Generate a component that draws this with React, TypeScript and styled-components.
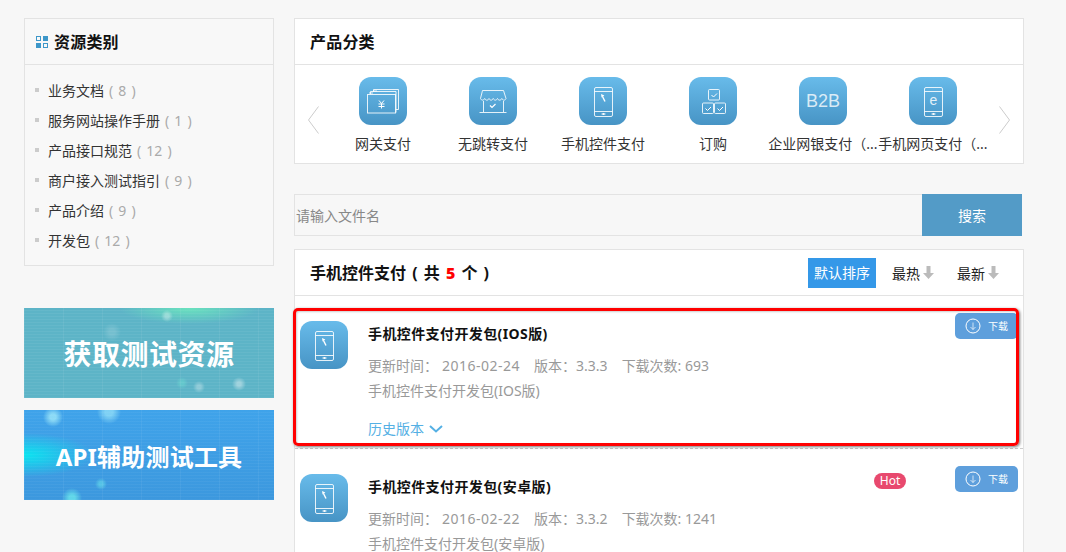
import React from "react";
import styled, { createGlobalStyle, css } from "styled-components";

const FONT = `"Noto Sans", "Noto Sans CJK SC", sans-serif`;

const Global = createGlobalStyle`
  html, body { margin: 0; padding: 0; height: 552px; overflow: hidden; background: #f7f7f7; }
  body { font-family: ${FONT}; color: #333; }
  * { box-sizing: border-box; }
`;

const Page = styled.div`
  display: flex;
  gap: 20px;
  padding: 18px 0 0 24px;
  height: 552px;
  overflow: hidden;
`;
const Side = styled.aside`
  width: 250px;
  flex: none;
  display: flex;
  flex-direction: column;
`;
const Main = styled.main`
  width: 730px;
  flex: none;
  display: flex;
  flex-direction: column;
`;
const SidePanel = styled.section`
  height: 248px;
  flex: none;
  border: 1px solid #e3e3e3;
  background: #f8f8f8;
`;
const PanelHead = styled.header`
  height: 46px;
  display: flex;
  align-items: center;
  gap: 6px;
  border-bottom: 1px solid #e3e3e3;
  font-size: 16px;
  line-height: 44px;
  font-weight: bold;
  letter-spacing: 0.2px;
  color: #111;
`;
const SideHead = styled(PanelHead)`
  padding-left: 11px;
`;
const CatList = styled.ul`
  list-style: none;
  margin: 0;
  padding: 11px 0 0 10px;
`;
const CatRow = styled.li`
  height: 30px;
  display: flex;
  align-items: center;
  gap: 9px;
  font-size: 14px;
  line-height: 28px;
  color: #333;
  &::before {
    content: "";
    width: 4px;
    height: 4px;
    margin-top: -2px;
    background: #ccc;
  }
`;
const Count = styled.span`
  color: #aaa;
  margin-left: 5px;
  white-space: pre;
  word-spacing: 1.5px;
`;
const Banner = styled.div<{ $kind: "green" | "blue"; $top: number }>`
  height: 90px;
  flex: none;
  margin-top: ${(p) => p.$top}px;
  display: flex;
  align-items: center;
  justify-content: center;
  color: #fff;
  font-weight: bold;
  white-space: nowrap;
  ${(p) =>
    p.$kind === "green"
      ? css`
          font-size: 28px;
          letter-spacing: 0.5px;
          background:
            repeating-linear-gradient(0deg, rgba(255,255,255,.05) 0 1px, transparent 1px 3px),
            repeating-linear-gradient(90deg, rgba(255,255,255,.06) 0 1px, transparent 1px 39px),
            radial-gradient(circle at 143px 8px, rgba(255,255,255,.35) 0 2px, transparent 6px),
            radial-gradient(circle at 215px 76px, rgba(255,255,255,.4) 0 2px, transparent 7px),
            radial-gradient(circle at 175px 79px, rgba(255,255,255,.3) 0 2px, transparent 6px),
            radial-gradient(circle at 88px 24px, rgba(255,255,255,.15) 0 3px, transparent 9px),
            radial-gradient(circle at 158px 75px, rgba(120,255,220,.25) 0 2px, transparent 6px),
            radial-gradient(ellipse 70px 16px at 165px 0px, #6ae2be, transparent),
            #5db4c7;
        `
      : css`
          font-size: 24px;
          letter-spacing: 0.2px;
          background:
            repeating-linear-gradient(0deg, rgba(255,255,255,.04) 0 1px, transparent 1px 3px),
            repeating-linear-gradient(90deg, rgba(255,255,255,.05) 0 1px, transparent 1px 39px),
            radial-gradient(circle at 29px 7px, rgba(190,255,255,.6) 0 3px, transparent 10px),
            radial-gradient(circle at 85px 2px, rgba(190,255,255,.5) 0 4px, transparent 12px),
            radial-gradient(circle at 48px 88px, rgba(120,255,240,.6) 0 3px, transparent 10px),
            radial-gradient(circle at 77px 74px, rgba(120,255,240,.4) 0 2px, transparent 6px),
            radial-gradient(ellipse 70px 22px at 0px 45px, #0ae4f0, transparent),
            linear-gradient(180deg, #3fa3ea, #3c98de);
        `}
`;
const CategoryPanel = styled.section`
  height: 146px;
  flex: none;
  border: 1px solid #e3e3e3;
  background: #fff;
`;
const TitleHead = styled(PanelHead)`
  padding-left: 15px;
`;
const Carousel = styled.div`
  display: flex;
  align-items: flex-start;
  padding: 12px 0 0 13px;
`;
const ArrowBox = styled.svg<{ $after?: boolean }>`
  flex: none;
  width: 11px;
  height: 28px;
  margin: 29px ${(p) => (p.$after ? 0 : "9px")} 0 ${(p) => (p.$after ? "11px" : 0)};
`;
const CatItem = styled.div`
  width: 110px;
  flex: none;
  display: flex;
  flex-direction: column;
  align-items: center;
`;
const Tile = styled.div`
  width: 48px;
  height: 48px;
  flex: none;
  border-radius: 12px;
  background: linear-gradient(180deg, #68bbea, #4794c5);
  display: flex;
  align-items: center;
  justify-content: center;
`;
const TileText = styled.span`
  color: rgba(255, 255, 255, 0.78);
  font-family: "Liberation Sans", sans-serif;
  font-size: 18px;
`;
const CatLabel = styled.div`
  width: 110px;
  margin-top: 9px;
  font-size: 14px;
  line-height: 20px;
  text-align: center;
  color: #333;
  white-space: nowrap;
`;
const Search = styled.form`
  display: flex;
  flex: none;
  height: 42px;
  margin: 30px 0 13px;
`;
const SearchInput = styled.input`
  width: 628px;
  height: 42px;
  border: 1px solid #e3e3e3;
  border-right: 0;
  background: #f7f7f7;
  padding: 0 1px;
  font: 14px ${FONT};
  outline: none;
  &::placeholder {
    color: #888;
    opacity: 1;
  }
`;
const SearchButton = styled.button`
  width: 100px;
  height: 42px;
  border: 0;
  background: #539bc7;
  color: #fff;
  font: 14px ${FONT};
`;
const ListPanel = styled.section`
  position: relative;
  border: 1px solid #e3e3e3;
  border-bottom: 0;
  background: #fff;
  flex: none;
  height: 303px;
`;
const ListHead = styled.header`
  height: 46px;
  display: flex;
  align-items: center;
  padding: 0 24px 0 15px;
  border-bottom: 1px solid #e3e3e3;
`;
const ListTitle = styled.h2`
  flex: 1;
  margin: 0;
  font-size: 16px;
  line-height: 44px;
  font-weight: bold;
  color: #111;
  white-space: pre;
  word-spacing: 2px;
`;
const Red = styled.b`
  color: #f00;
`;
const SortActive = styled.div`
  width: 68px;
  height: 30px;
  line-height: 30px;
  margin-right: 16px;
  text-align: center;
  background: #3498e8;
  color: #fff;
  font-size: 14px;
`;
const SortOption = styled.div`
  display: flex;
  align-items: center;
  gap: 3px;
  font-size: 14px;
  color: #222;
  & + & {
    margin-left: 23px;
  }
`;
const Item = styled.article`
  position: relative;
  height: 153px;
  padding: 25px 0 0 5px;
  display: flex;
  gap: 20px;
  border-bottom: 1px dashed #ccc;
`;
const ItemBody = styled.div`
  flex: 1;
  min-width: 0;
`;
const ItemTitle = styled.h3`
  margin: 0 0 6px;
  font-size: 14px;
  line-height: 26px;
  font-weight: bold;
  letter-spacing: 0.4px;
  color: #111;
`;
const Meta = styled.div`
  display: flex;
  font-size: 14px;
  line-height: 25px;
  color: #999;
  white-space: pre;
`;
const MetaPart = styled.span<{ $gap: number; $wide?: boolean }>`
  margin-right: ${(p) => p.$gap}px;
  letter-spacing: ${(p) => (p.$wide ? "0.5px" : "0")};
`;
const Desc = styled.div`
  font-size: 14px;
  line-height: 25px;
  color: #999;
`;
const History = styled.a`
  display: flex;
  align-items: center;
  gap: 5px;
  margin-top: 13px;
  font-size: 14px;
  line-height: 25px;
  color: #55b0e4;
`;
const DownloadButton = styled.div`
  position: absolute;
  top: 17px;
  right: 5px;
  width: 63px;
  height: 26px;
  border-radius: 5px;
  background: #5e9fdc;
  color: #fff;
  font-size: 10px;
  line-height: 24px;
  display: flex;
  align-items: center;
  padding-left: 10px;
  gap: 7px;
`;
const HotBadge = styled.span`
  position: absolute;
  top: 24px;
  left: 579px;
  width: 32px;
  height: 16px;
  border-radius: 8px;
  background: #e8496e;
  color: #fff;
  font-size: 12px;
  line-height: 16px;
  text-align: center;
`;
const Highlight = styled.div`
  position: absolute;
  left: -2px;
  top: 58px;
  width: 726px;
  height: 138px;
  border: 3px solid #f00;
  border-radius: 5px;
  box-shadow: 1px 1px 3px rgba(0, 0, 0, 0.55), inset 1px 1px 2px rgba(0, 0, 0, 0.2);
  pointer-events: none;
`;

const line = { fill: "none", stroke: "rgba(255,255,255,.85)", strokeWidth: 1 };

const PhoneIcon = ({ mark }: { mark: "arrow" | "e" }) => (
  <svg width="48" height="48" viewBox="0 0 48 48">
    <rect x="15.5" y="10.5" width="18" height="29" rx="1.5" {...line} />
    <path d="M15.5 14.5h18M15.5 34.5h18" {...line} />
    <path d="M22.5 37h4" stroke="#fff" strokeWidth="1" fill="none" />
    <circle cx="24.5" cy="37" r="1" fill="#fff" />
    {mark === "arrow" ? (
      <>
        <path d="M23.5 19.5l2.5 5" stroke="#fff" strokeWidth="1.4" fill="none" />
        <path d="M22 17l3.4 1.4-2.8 2z" fill="#fff" />
      </>
    ) : (
      <text x="24.5" y="27.5" fill="rgba(255,255,255,.85)" fontSize="14" textAnchor="middle" fontFamily="Liberation Sans">e</text>
    )}
  </svg>
);
const GatewayIcon = () => (
  <svg width="48" height="48" viewBox="0 0 48 48">
    <path d="M14.5 15v-2.5h25v20h-2.500" {...line} />
    <path d="M11.5 17v-2.5h25.500v21" {...line} />
    <rect x="8.5" y="17.5" width="28" height="18.500" {...line} />
    <path d="M11 15v2M13 15v2M15 13v2M17 13v2" {...line} />
    <path d="M20 23.500l2.500 3 2.500-3M22.500 26.500v5M19.500 27h6M19.500 29.500h6" stroke="#fff" strokeWidth="1" fill="none" />
  </svg>
);
const StoreIcon = () => (
  <svg width="48" height="48" viewBox="0 0 48 48">
    <path d="M13.5 13.5h21l2.500 8c-.8 2.200-3.200 2.200-4.200 0-1 2.200-3.200 2.200-4.300 0-1 2.200-3.200 2.200-4.300 0-1 2.200-3.200 2.200-4.200 0-1 2.200-3.300 2.200-4.300 0-1 2.200-3.200 2.200-4.200 0z" {...line} />
    <path d="M14.5 24v11M34.5 24v11M10.5 35.500h27" {...line} />
    <path d="M21 28.500l2 2 3.500-3.500" stroke="#fff" strokeWidth="1.2" fill="none" />
  </svg>
);
const CubesIcon = () => (
  <svg width="48" height="48" viewBox="0 0 48 48">
    {[[19.5, 12.5], [13.5, 26], [25.5, 26]].map(([x, y]) => (
      <g key={`${x}-${y}`}>
        <rect x={x} y={y} width="11" height="10.5" rx="1" {...line} />
        <path d={`M${x + 3} ${y + 5.5}l2 2 3.5-3.5`} stroke="#fff" strokeWidth="1" fill="none" />
      </g>
    ))}
  </svg>
);
const GridIcon = () => (
  <svg width="12" height="12" viewBox="0 0 12 12">
    <rect x="0.5" y="0.5" width="4" height="4" fill="none" stroke="#3d97c9" />
    <rect x="7" y="0" width="5" height="5" fill="#3d97c9" />
    <rect x="0" y="7" width="5" height="5" fill="#3d97c9" />
    <rect x="7.5" y="7.5" width="4" height="4" fill="none" stroke="#3d97c9" />
  </svg>
);
const Chevron = ({ after }: { after?: boolean }) => (
  <ArrowBox $after={after} viewBox="0 0 11 28">
    <path d={after ? "M0.5 0.5L10.5 14 0.5 27.5" : "M10.5 0.5L0.5 14 10.5 27.5"} fill="none" stroke="#ccc" />
  </ArrowBox>
);
const DownArrow = () => (
  <svg width="11" height="13" viewBox="0 0 11 13">
    <path d="M3.5 0h4v7h3.500l-5.500 6-5.500-6h3.500z" fill="#bbb" />
  </svg>
);
const DownloadCircle = () => (
  <svg width="16" height="16" viewBox="0 0 16 16" fill="none" stroke="#fff">
    <circle cx="8" cy="8" r="7" />
    <path d="M8 4.5v7M5.5 9L8 11.5 10.5 9" strokeOpacity=".7" />
  </svg>
);
const HistoryChevron = () => (
  <svg width="14" height="8" viewBox="0 0 14 8">
    <path d="M1 1l6 5.500L13 1" fill="none" stroke="#55b0e4" strokeWidth="2" />
  </svg>
);

const categories = [
  ["业务文档", "( 8 )"],
  ["服务网站操作手册", "( 1 )"],
  ["产品接口规范", "( 12 )"],
  ["商户接入测试指引", "( 9 )"],
  ["产品介绍", "( 9 )"],
  ["开发包", "( 12 )"],
];

const products: [React.ReactNode, string][] = [
  [<GatewayIcon />, "网关支付"],
  [<StoreIcon />, "无跳转支付"],
  [<PhoneIcon mark="arrow" />, "手机控件支付"],
  [<CubesIcon />, "订购"],
  [<TileText>B2B</TileText>, "企业网银支付（..."],
  [<PhoneIcon mark="e" />, "手机网页支付（..."],
];

const downloads = [
  { name: "手机控件支付开发包(IOS版)", date: "2016-02-24", version: "3.3.3", count: 693, hot: false },
  { name: "手机控件支付开发包(安卓版)", date: "2016-02-22", version: "3.3.2", count: 1241, hot: true },
];

export default function App() {
  return (
    <Page>
      <Global />
      <Side>
        <SidePanel>
          <SideHead>
            <GridIcon />
            资源类别
          </SideHead>
          <CatList>
            {categories.map(([name, count]) => (
              <CatRow key={name}>
                <span>
                  {name}
                  <Count>{count}</Count>
                </span>
              </CatRow>
            ))}
          </CatList>
        </SidePanel>
        <Banner $kind="green" $top={42}>获取测试资源</Banner>
        <Banner $kind="blue" $top={12}>API辅助测试工具</Banner>
      </Side>
      <Main>
        <CategoryPanel>
          <TitleHead>产品分类</TitleHead>
          <Carousel>
            <Chevron />
            {products.map(([icon, label]) => (
              <CatItem key={label}>
                <Tile>{icon}</Tile>
                <CatLabel>{label}</CatLabel>
              </CatItem>
            ))}
            <Chevron after />
          </Carousel>
        </CategoryPanel>
        <Search>
          <SearchInput placeholder="请输入文件名" />
          <SearchButton type="button">搜索</SearchButton>
        </Search>
        <ListPanel>
          <ListHead>
            <ListTitle>
              手机控件支付 ( 共 <Red>5</Red> 个 )
            </ListTitle>
            <SortActive>默认排序</SortActive>
            <SortOption>最热<DownArrow /></SortOption>
            <SortOption>最新<DownArrow /></SortOption>
          </ListHead>
          {downloads.map((d) => (
            <Item key={d.name}>
              <Tile><PhoneIcon mark="arrow" /></Tile>
              <ItemBody>
                <ItemTitle>{d.name}</ItemTitle>
                <Meta>
                  <MetaPart $gap={4}>更新时间：</MetaPart>
                  <MetaPart $gap={14} $wide>{d.date}</MetaPart>
                  <MetaPart $gap={14}>版本：{d.version}</MetaPart>
                  <span>下载次数: {d.count}</span>
                </Meta>
                <Desc>{d.name}</Desc>
                <History>历史版本 <HistoryChevron /></History>
              </ItemBody>
              {d.hot && <HotBadge>Hot</HotBadge>}
              <DownloadButton><DownloadCircle />下载</DownloadButton>
            </Item>
          ))}
          <Highlight />
        </ListPanel>
      </Main>
    </Page>
  );
}
